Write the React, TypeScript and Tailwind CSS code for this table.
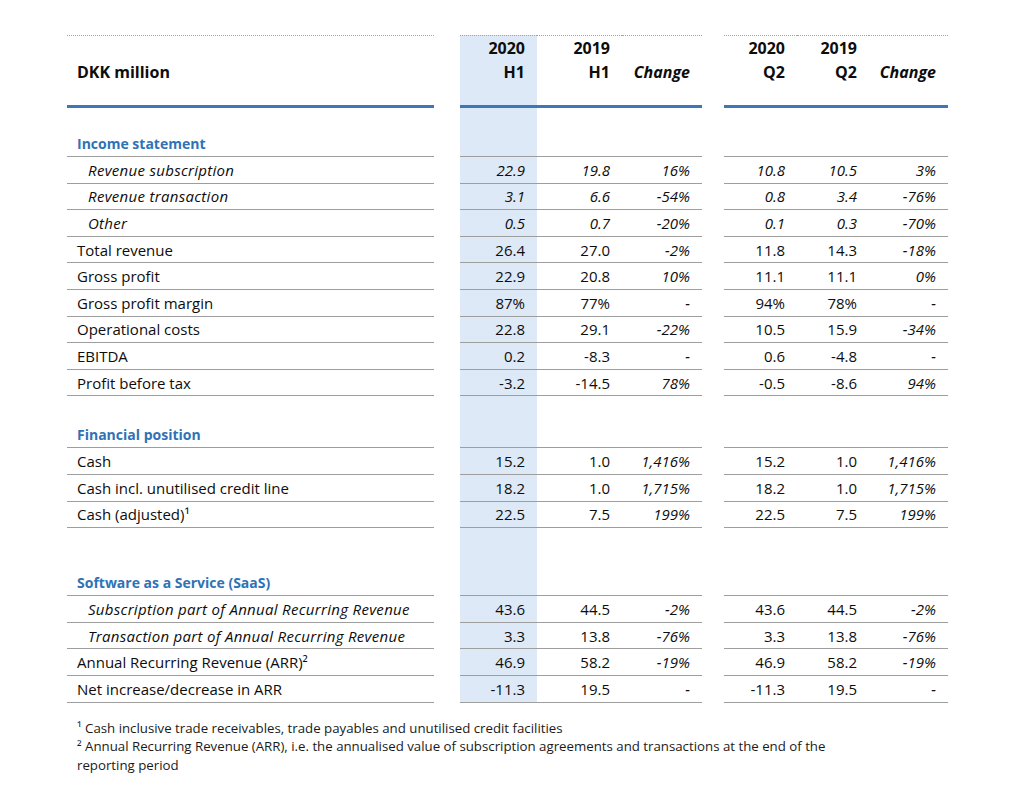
import React from "react";

type Vals = [string, string, string];
type Row = { label: string; sub?: boolean; italicNums?: boolean; h1: Vals; q2: Vals };

const COLS = "grid grid-cols-[367px_26px_77px_85px_80px_22px_73px_72px_79px]";
const FONT = "font-['Open_Sans','Lato',sans-serif]";

const income: Row[] = [
  { label: "Revenue subscription", sub: true, italicNums: true, h1: ["22.9", "19.8", "16%"], q2: ["10.8", "10.5", "3%"] },
  { label: "Revenue transaction", sub: true, italicNums: true, h1: ["3.1", "6.6", "-54%"], q2: ["0.8", "3.4", "-76%"] },
  { label: "Other", sub: true, italicNums: true, h1: ["0.5", "0.7", "-20%"], q2: ["0.1", "0.3", "-70%"] },
  { label: "Total revenue", h1: ["26.4", "27.0", "-2%"], q2: ["11.8", "14.3", "-18%"] },
  { label: "Gross profit", h1: ["22.9", "20.8", "10%"], q2: ["11.1", "11.1", "0%"] },
  { label: "Gross profit margin", h1: ["87%", "77%", "-"], q2: ["94%", "78%", "-"] },
  { label: "Operational costs", h1: ["22.8", "29.1", "-22%"], q2: ["10.5", "15.9", "-34%"] },
  { label: "EBITDA", h1: ["0.2", "-8.3", "-"], q2: ["0.6", "-4.8", "-"] },
  { label: "Profit before tax", h1: ["-3.2", "-14.5", "78%"], q2: ["-0.5", "-8.6", "94%"] },
];

const financial: Row[] = [
  { label: "Cash", h1: ["15.2", "1.0", "1,416%"], q2: ["15.2", "1.0", "1,416%"] },
  { label: "Cash incl. unutilised credit line", h1: ["18.2", "1.0", "1,715%"], q2: ["18.2", "1.0", "1,715%"] },
  { label: "Cash (adjusted)¹", h1: ["22.5", "7.5", "199%"], q2: ["22.5", "7.5", "199%"] },
];

const saas: Row[] = [
  { label: "Subscription part of Annual Recurring Revenue", sub: true, h1: ["43.6", "44.5", "-2%"], q2: ["43.6", "44.5", "-2%"] },
  { label: "Transaction part of Annual Recurring Revenue", sub: true, h1: ["3.3", "13.8", "-76%"], q2: ["3.3", "13.8", "-76%"] },
  { label: "Annual Recurring Revenue (ARR)²", h1: ["46.9", "58.2", "-19%"], q2: ["46.9", "58.2", "-19%"] },
  { label: "Net increase/decrease in ARR", h1: ["-11.3", "19.5", "-"], q2: ["-11.3", "19.5", "-"] },
];

const line = "border-b border-[#9e9e9e]";
const blue = "bg-[#dde9f6]";
const headBorder =
  "border-t border-b-[3px] border-dotted [border-bottom-style:solid] border-t-[#8aa6cc] border-b-[#3b77b9]";

function Gap() {
  return <div />;
}

function DataRow({ row }: { row: Row }) {
  const num = row.italicNums ? "italic" : "";
  const cell = `${line} flex items-center justify-end pr-3`;
  return (
    <div className={`${COLS} h-[26.6px]`}>
      <div className={`${line} flex items-center ${row.sub ? "pl-[21px] italic tracking-[0.3px]" : "pl-[10px]"}`}>{row.label}</div>
      <Gap />
      <div className={`${cell} ${blue} ${num}`}>{row.h1[0]}</div>
      <div className={`${cell} ${num}`}>{row.h1[1]}</div>
      <div className={`${cell} italic`}>{row.h1[2]}</div>
      <Gap />
      <div className={`${cell} ${num}`}>{row.q2[0]}</div>
      <div className={`${cell} ${num}`}>{row.q2[1]}</div>
      <div className={`${cell} italic`}>{row.q2[2]}</div>
    </div>
  );
}

function TitleRow({ title, height }: { title: string; height: string }) {
  return (
    <div className={`${COLS} ${height}`}>
      <div className={`${line} flex items-end pl-[10px] text-[14px] font-bold text-[#2f72b6]`}>{title}</div>
      <Gap />
      <div className={`${line} ${blue}`} />
      <div className={line} />
      <div className={line} />
      <Gap />
      <div className={line} />
      <div className={line} />
      <div className={line} />
    </div>
  );
}

function Head({ top, bottom, italic, shaded }: { top?: string; bottom: string; italic?: boolean; shaded?: boolean }) {
  return (
    <div className={`flex flex-col items-end pr-3 ${headBorder} ${shaded ? blue : ""}`}>
      <span className="h-6">{top}</span>
      <span className={italic ? "italic" : ""}>{bottom}</span>
    </div>
  );
}

export default function App() {
  return (
    <div className={`w-[1024px] h-[803px] bg-white pl-[67px] pt-[35px] text-[15px] leading-6 text-[#0d0d0d] ${FONT}`}>
      <div className={`${COLS} h-[73px] font-bold text-[16px]`}>
        <div className={`flex items-start pl-[10px] pt-6 ${headBorder}`}>DKK million</div>
        <Gap />
        <Head top="2020" bottom="H1" shaded />
        <Head top="2019" bottom="H1" />
        <Head bottom="Change" italic />
        <Gap />
        <Head top="2020" bottom="Q2" />
        <Head top="2019" bottom="Q2" />
        <Head bottom="Change" italic />
      </div>

      <TitleRow title="Income statement" height="h-[49px]" />
      {income.map((r) => (
        <DataRow key={r.label} row={r} />
      ))}

      <TitleRow title="Financial position" height="h-[52px]" />
      {financial.map((r) => (
        <DataRow key={r.label} row={r} />
      ))}

      <TitleRow title="Software as a Service (SaaS)" height="h-[68px]" />
      {saas.map((r) => (
        <DataRow key={r.label} row={r} />
      ))}

      <div className="mt-4 pl-[10px] text-[13.25px] leading-[18.5px] text-[#1a1a1a] whitespace-nowrap">
        <p>¹ Cash inclusive trade receivables, trade payables and unutilised credit facilities</p>
        <p>² Annual Recurring Revenue (ARR), i.e. the annualised value of subscription agreements and transactions at the end of the</p>
        <p>reporting period</p>
      </div>
    </div>
  );
}
